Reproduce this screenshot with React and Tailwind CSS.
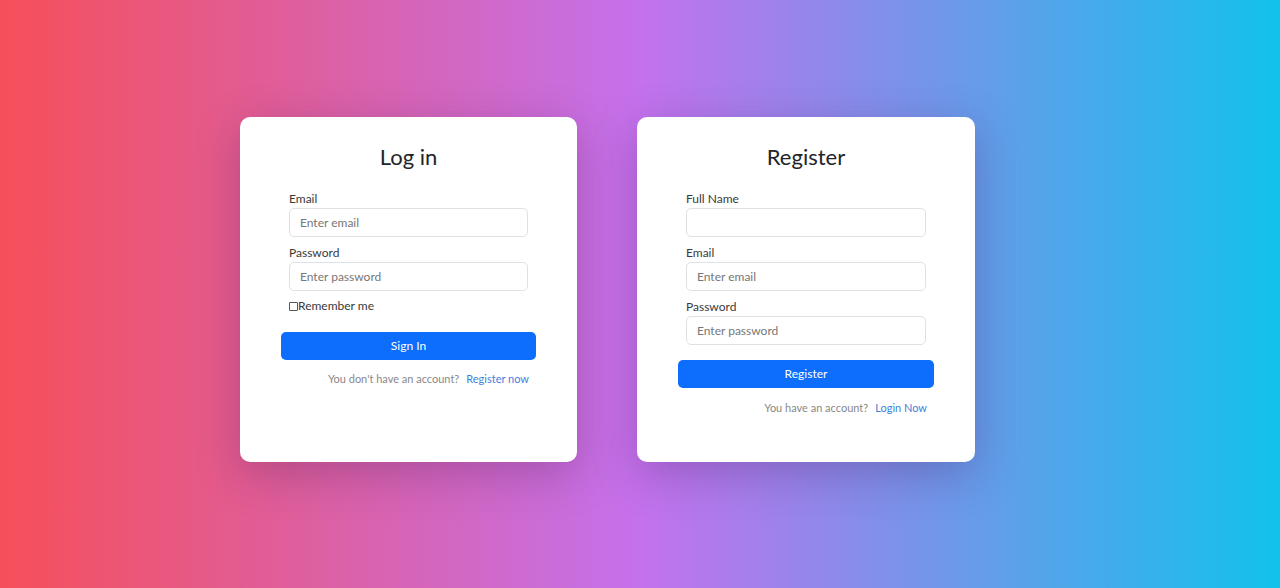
import React from 'react';

const font = { fontFamily: 'Lato, "Noto Sans", sans-serif' };

function Field({ label, placeholder, type = 'text' }) {
  return (
    <div className="flex flex-col">
      <label className="text-[12px] leading-[16px] text-[#3a3a3a] mb-[1px]">{label}</label>
      <input
        type={type}
        placeholder={placeholder}
        className="h-[29px] w-full rounded-[5px] border border-[#dee2e6] bg-white px-[10px] text-[12px] text-[#212529] placeholder:text-[#777] outline-none"
      />
    </div>
  );
}

function Card({ title, wide, children }) {
  return (
    <div className={`${wide ? 'w-[338px]' : 'w-[337px]'} h-[345px] bg-white rounded-[10px] shadow-[0_12px_45px_rgba(60,20,80,0.28)] pt-[27px] flex flex-col`}>
      <h2 className="text-center text-[22px] leading-[26px] text-[#212529] mb-[21px]">{title}</h2>
      {children}
    </div>
  );
}

export default function App() {
  return (
    <div
      style={font}
      className="min-h-screen w-full bg-[linear-gradient(to_right,#f64f59,#c471ed,#12c2e9)] flex items-center pl-[240px] pb-[9px] gap-[60px]"
    >
      <Card title="Log in">
        <div className="px-[49px] flex flex-col gap-[8px]">
          <Field label="Email" placeholder="Enter email" type="email" />
          <Field label="Password" placeholder="Enter password" type="password" />
        </div>
        <div className="px-[49px] mt-[7px] flex items-center text-[12px] leading-[16px] text-[#3a3a3a]">
          <span className="w-[9px] h-[9px] border border-[#555] rounded-[1px] bg-white" />
          <span>Remember me</span>
        </div>
        <div className="px-[41px] mt-[18px]">
          <button className="w-full h-[28px] rounded-[5px] bg-[#0d6efd] text-white text-[12px]">Sign In</button>
        </div>
        <p className="px-[48px] mt-[12px] text-right text-[11px] leading-[14px] text-[#888]">
          You don't have an account?<a className="ml-[7px] text-[#3f7fdc]">Register now</a>
        </p>
      </Card>
      <Card title="Register" wide>
        <div className="px-[49px] flex flex-col gap-[8px]">
          <Field label="Full Name" placeholder="" />
          <Field label="Email" placeholder="Enter email" type="email" />
          <Field label="Password" placeholder="Enter password" type="password" />
        </div>
        <div className="px-[41px] mt-[15px]">
          <button className="w-full h-[28px] rounded-[5px] bg-[#0d6efd] text-white text-[12px]">Register</button>
        </div>
        <p className="px-[48px] mt-[13px] text-right text-[11px] leading-[14px] text-[#888]">
          You have an account?<a className="ml-[7px] text-[#3f7fdc]">Login Now</a>
        </p>
      </Card>
    </div>
  );
}
